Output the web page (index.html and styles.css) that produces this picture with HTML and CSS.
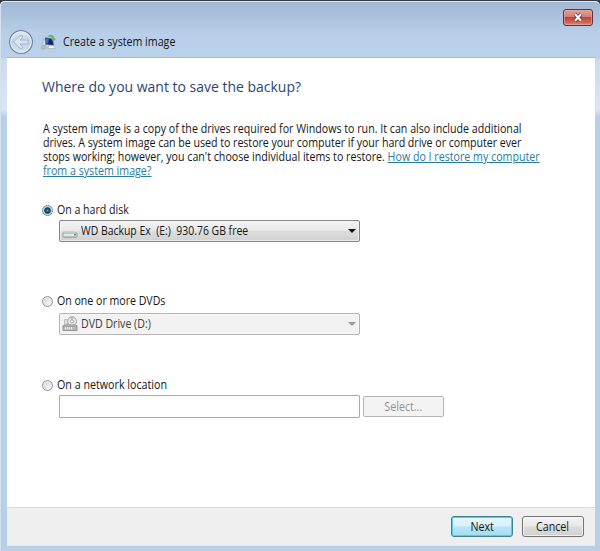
FILE: index.html
```html
<!DOCTYPE html>
<html lang="en">
<head>
<meta charset="utf-8">
<title>Create a system image</title>
<link rel="stylesheet" href="styles.css">
</head>
<body>
<div class="window">
  <header class="titlebar">
    <div class="controls">
      <button class="close" aria-label="Close">
        <svg width="10" height="9" viewBox="0 0 10 9"><path d="M1.8 1.2 8.2 7.8M8.2 1.2 1.8 7.8" stroke="#6d3537" stroke-width="3.6"/><path d="M2 1.3 8 7.7M8 1.3 2 7.7" stroke="#fff" stroke-width="2"/></svg>
      </button>
    </div>
    <div class="heading">
      <svg class="back" width="26" height="26" viewBox="0 0 26 26">
        <defs><linearGradient id="glass" x2="0" y2="1"><stop stop-color="#dce8f5"/><stop offset=".5" stop-color="#c1d2e5"/><stop offset="1" stop-color="#d6e6f6"/></linearGradient></defs>
        <circle cx="13" cy="13" r="11.4" fill="url(#glass)" stroke="#71849b" stroke-width="1.2"/>
        <circle cx="13" cy="13" r="10.3" fill="none" stroke="#e8f1fa" stroke-width=".8"/>
        <path d="M5.5 13 11.8 6.7H14.5V8.5L12 11H20V15H12L14.5 17.5V19.3H11.8Z" fill="#d8e3ee" stroke="#9badc1" stroke-width=".8"/>
      </svg>
      <svg class="appicon" width="16" height="16" viewBox="0 0 16 16">
        <path d="M2 6H4.5V12H2Z" fill="#e3e6ea" stroke="#8e9bad" stroke-width=".6"/>
        <path d="M.5 12.5 4 11.5 5 14.5 1 15.2Z" fill="#c4bdb9" stroke="#9c9ca4" stroke-width=".5"/>
        <path d="M4 3.5 11.5 4.5 13 11.5 4.5 10.5Z" fill="#14246e" stroke="#8fa2c1" stroke-width=".6"/>
        <path d="M5 4.5H8L7 9.5H5Z" fill="#416db9"/>
        <path d="M7.5 11.5H12.5L14.5 14.5H7Z" fill="#f0f2f4" stroke="#929dac" stroke-width=".5"/>
        <path d="M7 2C10-.7 13.5 1.2 13.4 4.6H15.2L12.6 7.8 9.9 4.8H11.2C11 3.1 9.2 2.3 7 3.3Z" fill="#64b765"/>
      </svg>
      <span class="caption narrow">Create a system image</span>
    </div>
  </header>
  <main class="client">
    <section class="page">
      <h1>Where do you want to save the backup?</h1>
      <p class="intro">A system image is a copy of the drives required for Windows to run. It can also include additional<br><span class="tight">drives. A system image can be used to restore your computer if your hard drive or computer ever</span><br>stops working; however, you can't choose individual items to restore. <a href="#">How do I restore my computer<br>from a system image?</a></p>
      <div class="option disk">
        <div class="choice"><i class="radio on"></i><span class="narrow">On a hard disk</span></div>
        <div class="select">
          <svg class="drive" width="16" height="16" viewBox="0 0 16 16"><path d="M2.5 8.5H13L15 10.5H1Z" fill="#f4f5f5" stroke="#b6babb" stroke-width=".6"/><rect x="1" y="10" width="14" height="4.2" rx=".8" fill="#e6e9e9" stroke="#7d8586" stroke-width=".8"/><path d="M2 13.4H14" stroke="#a5acae" stroke-width=".6"/><rect x="12" y="11" width="2" height="1.5" fill="#4fa36c"/></svg>
          <span class="narrow drivename">WD Backup Ex&nbsp; (E:)&nbsp; 930.76 GB free</span>
          <i class="arrow"></i>
        </div>
      </div>
      <div class="option dvd">
        <div class="choice"><i class="radio"></i><span class="narrow">On one or more DVDs</span></div>
        <div class="select off">
          <svg class="drive" width="16" height="16" viewBox="0 0 16 16"><circle cx="10" cy="5.3" r="4.5" fill="#e5e5e5" stroke="#a2a2a2" stroke-width=".9"/><circle cx="10" cy="5.3" r="1.5" fill="#fff" stroke="#929292" stroke-width=".7"/><path d="M10 1V3.5" stroke="#888"/><path d="M2.5 3.5H5.5V10H2.5Z" fill="#ddd" stroke="#aaa" stroke-width=".6"/><path d="M3 8.5H13L15 10H1Z" fill="#ddd" stroke="#999" stroke-width=".6"/><rect x="1" y="10" width="14" height="4.5" fill="#b8b8b8" stroke="#858585" stroke-width=".8"/><path d="M3.5 11V13.5M5.5 11V13.5M7.5 11V13.5M9.5 11V13.5" stroke="#eee"/></svg>
          <span class="narrow">DVD Drive (D:)</span>
          <i class="arrow"></i>
        </div>
      </div>
      <div class="option net">
        <div class="choice"><i class="radio"></i><span class="narrow network">On a network location</span></div>
        <div class="row"><div class="field"></div><button class="pick" disabled><span>Select...</span></button></div>
      </div>
    </section>
    <footer>
      <button class="btn next"><span>Next</span></button>
      <button class="btn"><span>Cancel</span></button>
    </footer>
  </main>
</div>
</body>
</html>
```

FILE: styles.css
```css
* { box-sizing: border-box; }
body { margin: 0; background: #343a46; font: 12px/14px "Open Sans", "Noto Sans", sans-serif; color: #161616; }
button { font: inherit; padding: 0; }
button span { display: inline-block; transform: scaleX(.89); }
svg { display: block; flex: none; }
.narrow { display: inline-block; white-space: nowrap; transform: scaleX(.882); transform-origin: left; }
.window {
  height: 550px; margin-top: 1px; padding: 0 5px 5px 7px;
  display: flex; flex-direction: column;
  border-radius: 5px 5px 0 0;
  box-shadow: inset 0 1px #dce7f2, inset 1px 0 #d4e2ef;
  background: linear-gradient(#a1b8d3 0, #a9c1dc 14px, #b9cfe9 33px, #bad1e9 57px, #c8dbed 58px, #dce6f4 108px, #b9cfe7 116px, #b9cfe7 100%);
}
.titlebar { height: 57px; border-bottom: 1px solid #a5b8cb; }
.controls { display: flex; justify-content: flex-end; padding: 8px 2px 0 0; }
.close {
  width: 30px; height: 17px; display: flex; align-items: center; justify-content: center;
  border: 1px solid #63313d; border-radius: 3px;
  background: linear-gradient(#dca098 0, #d28078 45%, #bd463b 50%, #c95c4e 75%, #dc8878 100%);
  box-shadow: inset 0 0 0 1px #e7aaa499;
}
.heading { display: flex; align-items: center; height: 26px; margin: 3px 0 0 1px; }
.appicon { margin-left: 7px; }
.caption { margin-left: 6px; transform: scaleX(.888); }
.client { flex: 1; display: flex; flex-direction: column; background: #fff; border-bottom: 1px solid #dfe8f1; }
.page { flex: 1; padding: 17px 0 0 35px; }
h1 { margin: 0; font-size: 15px; line-height: 22px; font-weight: 400; color: #284674; width: max-content; transform: scaleX(.932); transform-origin: left; }
.intro { margin: 25px 0 0 1px; white-space: nowrap; width: max-content; transform: scaleX(.888); transform-origin: left; }
.tight { letter-spacing: -.04px; }
a { color: #2a7ba0; text-decoration: underline; text-underline-offset: 1px; }
.choice { display: flex; align-items: center; height: 14px; gap: 4px; }
.disk { margin-top: 25px; }
.dvd { margin-top: 52px; }
.net { margin-top: 43px; }
.network { transform: scaleX(.892); }
.radio { width: 11px; height: 11px; border-radius: 50%; border: 1px solid #929697; background: radial-gradient(circle at 65% 65%, #f4f4f4, #c9cccd); box-shadow: inset 0 0 0 1px #eee; }
.radio.on { border-color: #6f94a8; background: radial-gradient(circle, #5aa9c6 0, #174967 28%, #173e57 44%, #b8d8e6 58%, #dceaf1 100%); box-shadow: none; }
.select {
  width: 301px; height: 22px; margin: 3px 0 0 17px; padding: 0 3px 0 2px;
  display: flex; align-items: center; border: 1px solid #858585; border-radius: 2px;
  background: linear-gradient(#f3f3f3, #e8e8e8 48%, #dddddd 52%, #d1d1d1);
  box-shadow: inset 0 0 0 1px #f8f8f8aa;
}
.select.off { margin-top: 5px; border-color: #b4b4b4; background: #f2f2f2; color: #3e3e3e; }
.select span { margin-left: 3px; }
.drivename { transform: scaleX(.87); }
.arrow { margin-left: auto; border: 4px solid transparent; border-top-color: #111; border-bottom: 0; }
.off .arrow { border-top-color: #999; }
.row { display: flex; gap: 3px; margin: 3px 0 0 17px; }
.field { width: 301px; height: 23px; border: 1px solid #a9acad; border-radius: 1px; }
.pick { width: 81px; height: 21px; margin-top: 1px; border: 1px solid #b4b4b4; border-radius: 2px; background: #f3f3f3; color: #929292; }
footer { height: 38px; border-top: 1px solid #dadada; background: #efefef; display: flex; justify-content: flex-end; gap: 9px; padding: 8px 11px 0 0; }
.btn { width: 62px; height: 21px; border: 1px solid #737373; border-radius: 3px; background: linear-gradient(#f3f3f3, #e9e9e9 48%, #dcdcdc 52%, #d1d1d1); box-shadow: inset 0 0 0 1px #fafafabb; color: #161616; }
.next { border-color: #3d8295; background: linear-gradient(#e5f7fd, #d7f1fa 48%, #b8e4f5 52%, #a5dcf1); box-shadow: inset 0 0 0 1px #59cbe9; }
```
